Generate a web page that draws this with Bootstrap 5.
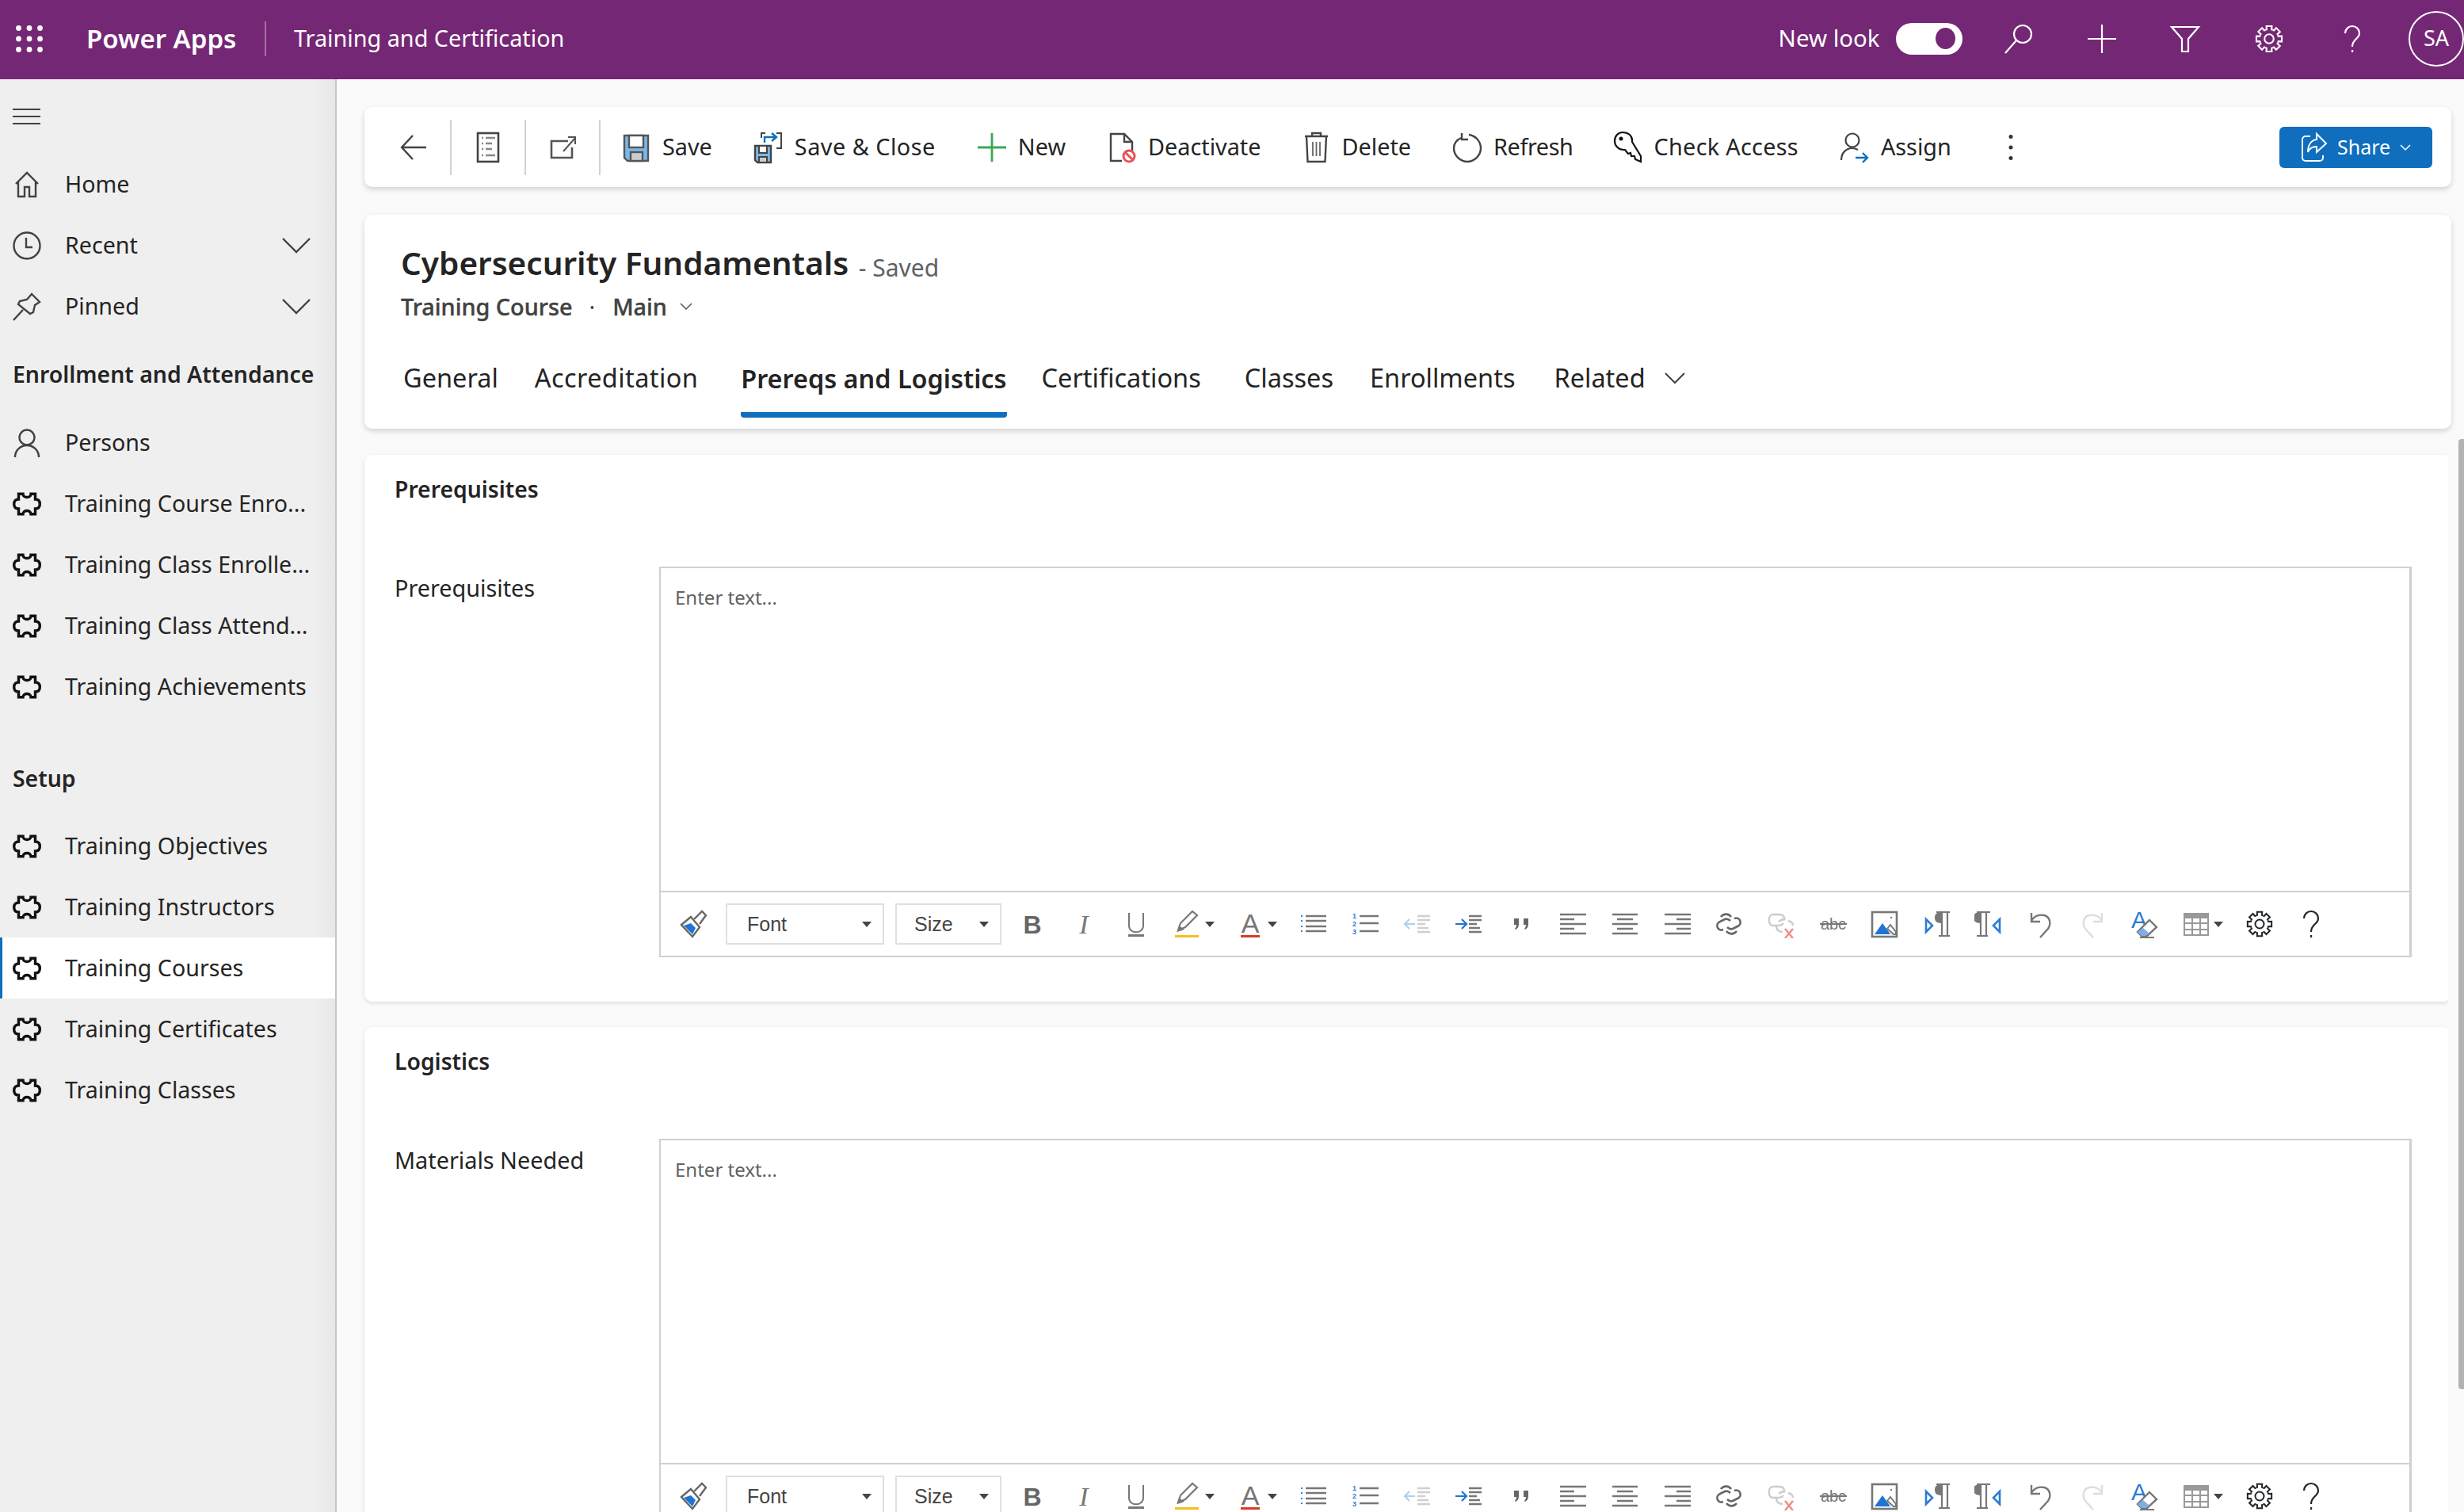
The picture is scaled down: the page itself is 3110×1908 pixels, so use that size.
<!DOCTYPE html>
<html lang="en"><head><meta charset="utf-8"><title>Power Apps</title>
<link href="https://cdn.jsdelivr.net/npm/bootstrap@5.3.0/dist/css/bootstrap.min.css" rel="stylesheet">
<style>
html,body{height:1908px;overflow:hidden}
body{font-family:"Noto Sans",sans-serif;font-size:28.8px;color:#242424;background:#fafafa;line-height:1.2}
svg{display:block;flex:none;overflow:visible}
.ic-line{fill:none;stroke:currentColor;stroke-width:2.4;stroke-linecap:butt;stroke-linejoin:miter}
.topbar{height:100px;background:#742774;color:#fff;padding-bottom:3px}
.tb-waffle{margin-left:20px;width:34px;height:34px}
.tb-brand{margin-left:55px;font-size:33px;font-weight:600;width:189px;white-space:nowrap}
.tb-sep{width:2px;height:44px;background:rgba(255,255,255,.35);margin:0 35px 0 36px}
.tb-look{font-size:29.4px}
.tb-sw{width:84px;height:40px;border-radius:20px;background:#fff;margin:0 18px 0 20px;padding-right:9px}
.tb-knob{width:25px;height:27px;border-radius:50%;background:#742774}
.tb-ico{width:105.5px}
.tb-av{width:70px;height:70px;border:2px solid #fff;border-radius:50%;font-size:27px;margin-left:18px}
.shell{height:1808px}
.sidenav{width:425px;flex:none;background:linear-gradient(to right,#efefef 94%,#e6e6e6 100%);border-right:2px solid #c6c6c6;font-size:28.6px}
.burger{height:94px;padding:37px 0 0 16px}
.sn-row{height:77px;padding-left:16px;color:#242424;text-decoration:none;white-space:nowrap}
.sn-ico{width:36px;height:36px;margin-right:30px;color:#424242}
.sn-puz{color:#111}
.sn-chev{width:36px;height:20px;margin-left:auto;margin-right:31px;color:#424242}
.sn-head{height:95px;padding-left:16px;font-weight:600;font-size:28.4px}
.sn-head-b{height:93px;margin-top:31px}
.sn-on{background:#fff;box-shadow:inset 3px 0 0 #106ebe}
.workarea{min-width:0;padding-top:35px;position:relative}
.panel{background:#fff;border-radius:10px;box-shadow:0 3px 7px rgba(0,0,0,.16)}
.cmdbar{height:101px;margin:0 16px 35px 35px;padding-left:44px}
.cmd-ic{width:36px;height:40px;color:#444}
.cmd-sep{width:2px;height:70px;background:#d2d2d2;margin:0 28px}
.cmd-sep-l{margin-right:27px}
.cmd-item{margin-right:53px;gap:15px;color:#242424;white-space:nowrap}
.cmd-wide{letter-spacing:.5px}
.cmd-tight{margin-right:51px}
.cmd-ref{letter-spacing:-.4px}
.cmd-chk{letter-spacing:.3px}
.cmd-more{margin-left:18px;width:8px;height:32px}
.share-btn{--bs-btn-bg:#106ebe;--bs-btn-hover-bg:#106ebe;--bs-btn-color:#fff;--bs-btn-hover-color:#fff;--bs-btn-border-width:0;width:193px;height:52px;margin:0 24px 0 auto;padding:0 0 0 27px;gap:12px;font-size:25px;border-radius:6px}
.titlecard{height:270px;margin:0 16px 0 35px;padding:34px 0 0 46px}
.rec-title{font-size:40.5px;font-weight:600;line-height:54px}
.rec-saved{font-size:30px;color:#616161;margin-left:2px;position:relative;top:2px}
.rec-sub{margin-top:2px;line-height:44px;color:#424242}
.rec-dot{margin:0 22px 0 21px}
.rec-sub b{font-weight:500;-webkit-text-stroke:.4px #424242}
.rec-tabs{margin-top:46px;padding-left:3px}
.rec-tabs .nav-link{padding:0 0 21px;color:#242424;font-size:32.500px;line-height:44px;border-bottom:7px solid transparent;border-radius:0 0 4px 4px;margin-bottom:0}
.rec-tabs .nav-link.active{font-weight:600;border-bottom-color:#106ebe;color:#242424;font-size:32.400px}
.rec-tabs .nav-item:nth-child(1){margin-right:46px}
.rec-tabs .nav-item:nth-child(2){margin-right:54px;letter-spacing:.4px}
.rec-tabs .nav-item:nth-child(3){margin-right:44px}
.rec-tabs .nav-item:nth-child(4){margin-right:55px}
.rec-tabs .nav-item:nth-child(5){margin-right:46px}
.rec-tabs .nav-item:nth-child(6){margin-right:49px}
.clipper{overflow:hidden;margin-right:20px;padding:36px 0 0 35px;margin-top:-3px}
.secbox{margin-right:-4px;padding:0 0 0 38px;box-shadow:0 2px 5px rgba(0,0,0,.12)}
.secbox-a{height:690px;margin-bottom:32px}
.secbox-b{height:700px}
.sec-h{height:141px;padding-top:27px;font-weight:600;font-size:28.3px}
.sec-lab{width:334px;flex:none;padding-top:10px;font-size:28.8px;font-weight:400}
.rte{width:2212px;height:493px;border:2px solid #d0d0d0;border-right-width:3px;background:#fff}
.rte-body{flex:1;padding:23px 18px 0;font-size:24px;color:#616161}
.rte-tools{height:82px;flex:none;border-top:2px solid #d0d0d0;color:#666}
.rt-s{width:65.6px;flex:none;color:#707070}
.rt-w{width:79px;flex:none;color:#707070;padding-left:14px;gap:4px}
.rt-p{width:82px;flex:none}
.rt-sel{height:52px;border:2px solid #e0e0e0;font-family:"Liberation Sans",sans-serif;font-size:25px;color:#444;padding:0 14px 0 25px;justify-content:space-between}
.rt-f{width:200px;margin-right:14px}
.rt-z{width:134px;margin-right:6px;padding-left:22px}
.rt-car{width:0;height:0;border-left:6px solid transparent;border-right:6px solid transparent;border-top:7px solid #444}
.thumb{position:absolute;right:0;top:454px;width:7px;height:1199px;background:#b3b3b3;border-radius:4px 0 0 4px}
</style></head>
<body>
<svg width="0" height="0" class="position-absolute">
<defs>
<symbol id="i-home" viewBox="0 0 36 36"><path class="ic-line" d="M4 17 18 3l14 14M7 14v19h8V21h6v12h8V14"/></symbol>
<symbol id="i-clock" viewBox="0 0 36 36"><circle class="ic-line" cx="18" cy="18" r="16.5"/><path class="ic-line" d="M17 8v12h8"/></symbol>
<symbol id="i-pin" viewBox="0 0 36 36"><path class="ic-line" d="M1 35 13 22M24 2l10 10-6 4-2 9-4 2L7 15l2-4 9-2z"/></symbol>
<symbol id="i-chev" viewBox="0 0 36 20"><path class="ic-line" d="M1 1l17 17L35 1"/></symbol>
<symbol id="i-person" viewBox="0 0 36 36"><circle class="ic-line" cx="18" cy="11" r="9.5"/><path class="ic-line" d="M3 36c0-9 7-15 15-15s15 6 15 15"/></symbol>
<symbol id="i-puzzle" viewBox="0 0 36 29"><path fill="none" stroke="currentColor" stroke-width="3.400" d="M7.500 1.700H13C13 7.500 23 7.500 23 1.700h5.500V8.500C32 8.500 34.300 10.500 34.300 14.500S32 20.500 28.500 20.500v6.800H23C23 21.500 13 21.500 13 27.300H7.500V20.500C4 20.500 1.700 18.500 1.700 14.500S4 8.500 7.500 8.500z"/></symbol>
<symbol id="i-gear" viewBox="0 0 36 36"><g fill="none" stroke="currentColor" stroke-width="2"><circle cx="18" cy="18" r="5.5"/><path id="g-t" d="M13.6 7.38 15 6.9l-.2-4.06h6.44L21 6.9l1.4.48"/><use href="#g-t" transform="rotate(45 18 18)"/><use href="#g-t" transform="rotate(90 18 18)"/><use href="#g-t" transform="rotate(135 18 18)"/><use href="#g-t" transform="rotate(180 18 18)"/><use href="#g-t" transform="rotate(225 18 18)"/><use href="#g-t" transform="rotate(270 18 18)"/><use href="#g-t" transform="rotate(315 18 18)"/></g></symbol>
<symbol id="i-help" viewBox="0 0 36 36"><path fill="none" stroke="currentColor" stroke-width="2.2" d="M9 11c0-5 4-9 9-9s9 4 9 9c0 4-3 6-5 8s-4 4-4 9"/><rect x="17" y="32" width="2.2" height="3" fill="currentColor"/></symbol>
<symbol id="r-paint" viewBox="0 0 36 36"><path d="M3 19 15 9l11 13-9 12z" fill="#fff" stroke="#666" stroke-width="2.4"/><path d="M6 20l9-3 6 6-4 8z" fill="#1f74d4"/><path d="M19 12l10-10 5 5-8 11" fill="#fff" stroke="#666" stroke-width="2.4"/></symbol>
<symbol id="r-b" viewBox="0 0 36 36"><text x="18" y="30" text-anchor="middle" font-family="Liberation Sans" font-weight="700" font-size="32" fill="#666">B</text></symbol>
<symbol id="r-i" viewBox="0 0 36 36"><text x="18" y="30" text-anchor="middle" font-family="Liberation Serif" font-style="italic" font-size="34" fill="#777">I</text></symbol>
<symbol id="r-u" viewBox="0 0 36 36"><path d="M9 4v16c0 11 18 11 18 0V4" fill="none" stroke="#777" stroke-width="2"/><rect x="8" y="31" width="20" height="3" fill="#777"/></symbol>
<symbol id="r-pen" viewBox="0 0 36 36"><path d="M6 26 9 17 24 2l6 5-15 15z" fill="none" stroke="#777" stroke-width="2.2"/><path d="M5 28l2-8 7 5z" fill="#777"/><rect x="2" y="32" width="30" height="3" fill="#f4c020"/></symbol>
<symbol id="r-a" viewBox="0 0 36 36"><text x="18" y="29" text-anchor="middle" font-family="Liberation Sans" font-size="34" fill="#777">A</text><rect x="6" y="32" width="24" height="3" fill="#d83b2b"/></symbol>
<symbol id="r-ul" viewBox="0 0 36 36"><path d="M8 8h26M8 14h26M8 21h26M8 27h26" stroke="#777" stroke-width="2.4"/><path d="M2 7h2v2H2zM2 13h2v2H2zM2 20h2v2H2zM2 26h2v2H2z" fill="#2b88d8"/></symbol>
<symbol id="r-ol" viewBox="0 0 36 36"><path d="M11 8h24M11 17h24M11 27h24" stroke="#777" stroke-width="2.4"/><g font-family="Liberation Sans" font-size="9" font-weight="700" fill="#2b7cd3"><text x="2" y="11">1</text><text x="2" y="21">2</text><text x="2" y="31">3</text></g></symbol>
<symbol id="r-ind" viewBox="0 0 36 36"><path d="M18 8h16M18 13h16M18 18h10M18 23h14M18 28h16" stroke="#777" stroke-width="2.4"/><path d="M1 18h13M9 12l6 6-6 6" fill="none" stroke="#1f74d4" stroke-width="2.2"/></symbol>
<symbol id="r-out" viewBox="0 0 36 36"><g opacity=".35"><path d="M18 8h16M18 13h16M18 18h10M18 23h14M18 28h16" stroke="#777" stroke-width="2.4"/><path d="M15 18H2M8 12l-6 6 6 6" fill="none" stroke="#1f74d4" stroke-width="2.2"/></g></symbol>
<symbol id="r-q" viewBox="0 0 36 36"><path d="M9 11h6v7c0 4-2 6-4 7l-1-1c1-1 2-3 2-5H9zM21 11h6v7c0 4-2 6-4 7l-1-1c1-1 2-3 2-5h-3z" fill="#666"/></symbol>
<symbol id="r-al" viewBox="0 0 36 36"><path d="M1 6h33M1 12h18M1 18h33M1 24h18M1 30h33" stroke="#777" stroke-width="2.4"/></symbol>
<symbol id="r-ac" viewBox="0 0 36 36"><path d="M2 6h32M8 12h20M2 18h32M8 24h20M2 30h32" stroke="#777" stroke-width="2.4"/></symbol>
<symbol id="r-ar" viewBox="0 0 36 36"><path d="M2 6h33M17 12h18M2 18h33M17 24h18M2 30h33" stroke="#777" stroke-width="2.4"/></symbol>
<symbol id="r-link" viewBox="0 0 36 36"><g fill="none" stroke="#666" stroke-width="2.6"><path d="M20 14c-2-2-4-3-7-2l-6 3c-7 3-3 13 4 10"/><path d="M16 22c2 2 4 3 7 2l6-3c7-3 3-13-4-10"/><path d="M8 9c4-5 10-4 13 0M28 27c-4 5-10 4-13 0"/></g></symbol>
<symbol id="r-unlink" viewBox="0 0 36 36"><g fill="none" stroke="#ccc" stroke-width="2.4"><path d="M21 17c-3 3-4 3-8 3H8C1 20 1 6 8 6h8c5 0 7 4 6 7"/><path d="M27 14c5 1 6 3 6 6M15 15c3-3 5-3 8-3M12 20c0 5 3 8 8 8"/></g><path d="M23 24l10 12M33 24 23 36" stroke="#ef8a80" stroke-width="2.4"/></symbol>
<symbol id="r-abc" viewBox="0 0 36 36"><text x="18" y="25" text-anchor="middle" font-family="Liberation Sans" font-size="20" fill="#777">abc</text><rect x="1" y="17" width="34" height="2" fill="#777"/></symbol>
<symbol id="r-img" viewBox="0 0 36 36"><rect x="2" y="3" width="31" height="31" fill="#fff" stroke="#777" stroke-width="2.6"/><path d="M5 31 15 17l10 14z" fill="#1f74d4"/><path d="M21 24l4-5 7 9v3h-3z" fill="none" stroke="#777" stroke-width="2"/><rect x="25" y="9" width="2" height="2" fill="#777"/></symbol>
<symbol id="r-ltr" viewBox="0 0 36 36"><path d="M4 12l8 8-8 8z" fill="none" stroke="#2b7cd3" stroke-width="2.6"/><path d="M17 3h17M24 3v30M31 3v30M20 33h14" fill="none" stroke="#777" stroke-width="2.2"/><path d="M24 17c-6 0-9-2-9-7s3-7 9-7z" fill="#777"/></symbol>
<symbol id="r-rtl" viewBox="0 0 36 36"><path d="M32 12l-8 8 8 8z" fill="none" stroke="#2b7cd3" stroke-width="2.6"/><path d="M3 3h17M8 3v30M15 3v30M3 33h14" fill="none" stroke="#777" stroke-width="2.2"/><path d="M8 17C2 17-1 15-1 10S2 3 8 3z" fill="#777"/></symbol>
<symbol id="r-undo" viewBox="0 0 36 36"><path d="M6 4v11h11M6 14C10 7 17 6 22 7c8 2 9 11 5 17l-10 11" fill="none" stroke="#777" stroke-width="2.4"/></symbol>
<symbol id="r-redo" viewBox="0 0 36 36"><path d="M30 4v11H19M30 14C26 7 19 6 14 7c-8 2-9 11-5 17l10 11" fill="none" stroke="#ddd" stroke-width="2.4"/></symbol>
<symbol id="r-clear" viewBox="0 0 36 36"><text x="11" y="23" text-anchor="middle" font-family="Liberation Sans" font-size="30" fill="#2b7cd3">A</text><path d="M24 13l9 9-12 11h-7l-5-5z" fill="#fff" stroke="#777" stroke-width="2.4"/><path d="M9 28l5 5h5l4-4-7-6z" fill="#7ab0ea"/><path d="M12 35h18" stroke="#777" stroke-width="2"/></symbol>
<symbol id="r-table" viewBox="0 0 36 36"><rect x="3" y="5" width="30" height="27" fill="#fff" stroke="#999" stroke-width="2"/><rect x="3" y="5" width="30" height="6" fill="#999"/><path d="M3 17h30M3 25h30M13 11v20M23 11v20" stroke="#999" stroke-width="2"/></symbol>
</defs></svg>

<header class="topbar d-flex align-items-center">
<svg class="tb-waffle" viewBox="0 0 34 34" fill="#fff"><circle cx="3.5" cy="3.5" r="3.4"/><circle cx="17" cy="3.5" r="3.4"/><circle cx="30.5" cy="3.5" r="3.4"/><circle cx="3.5" cy="17" r="3.4"/><circle cx="17" cy="17" r="3.4"/><circle cx="30.5" cy="17" r="3.4"/><circle cx="3.5" cy="30.5" r="3.4"/><circle cx="17" cy="30.5" r="3.4"/><circle cx="30.5" cy="30.5" r="3.4"/></svg>
<div class="tb-brand">Power Apps</div>
<div class="tb-sep"></div>
<div>Training and Certification</div>
<div class="ms-auto d-flex align-items-center">
<span class="tb-look">New look</span>
<div class="tb-sw d-flex align-items-center justify-content-end"><div class="tb-knob"></div></div>
<div class="tb-ico d-flex justify-content-center"><svg width="36" height="36" viewBox="0 0 36 36"><g fill="none" stroke="#fff" stroke-width="2.2"><circle cx="24" cy="12" r="11"/><path d="M16 20 2 36"/></g></svg></div>
<div class="tb-ico d-flex justify-content-center"><svg width="36" height="36" viewBox="0 0 36 36"><path d="M18 0v36M0 18h36" stroke="#fff" stroke-width="2.2"/></svg></div>
<div class="tb-ico d-flex justify-content-center"><svg width="36" height="36" viewBox="0 0 36 36"><path d="M1 3h34L22 18v16h-8V18z" fill="none" stroke="#fff" stroke-width="2.2"/></svg></div>
<div class="tb-ico d-flex justify-content-center text-white"><svg width="38" height="38"><use href="#i-gear"/></svg></div>
<div class="tb-ico d-flex justify-content-center text-white"><svg width="36" height="36"><use href="#i-help"/></svg></div>
<div class="tb-av d-flex align-items-center justify-content-center">SA</div>
</div>
</header>

<div class="shell d-flex">
<nav class="sidenav">
<div class="burger"><svg width="35" height="20" viewBox="0 0 35 20"><path d="M0 1h35M0 10h35M0 19h35" stroke="#424242" stroke-width="2"/></svg></div>
<a class="sn-row d-flex align-items-center" href="#"><svg class="sn-ico"><use href="#i-home"/></svg>Home</a>
<a class="sn-row d-flex align-items-center" href="#"><svg class="sn-ico"><use href="#i-clock"/></svg>Recent<svg class="sn-chev"><use href="#i-chev"/></svg></a>
<a class="sn-row d-flex align-items-center" href="#"><svg class="sn-ico"><use href="#i-pin"/></svg>Pinned<svg class="sn-chev"><use href="#i-chev"/></svg></a>
<div class="sn-head d-flex align-items-center">Enrollment and Attendance</div>
<a class="sn-row d-flex align-items-center" href="#"><svg class="sn-ico"><use href="#i-person"/></svg>Persons</a>
<a class="sn-row d-flex align-items-center" href="#"><svg class="sn-ico sn-puz"><use href="#i-puzzle"/></svg>Training Course Enro...</a>
<a class="sn-row d-flex align-items-center" href="#"><svg class="sn-ico sn-puz"><use href="#i-puzzle"/></svg>Training Class Enrolle...</a>
<a class="sn-row d-flex align-items-center" href="#"><svg class="sn-ico sn-puz"><use href="#i-puzzle"/></svg>Training Class Attend...</a>
<a class="sn-row d-flex align-items-center" href="#"><svg class="sn-ico sn-puz"><use href="#i-puzzle"/></svg>Training Achievements</a>
<div class="sn-head sn-head-b d-flex align-items-center">Setup</div>
<a class="sn-row d-flex align-items-center" href="#"><svg class="sn-ico sn-puz"><use href="#i-puzzle"/></svg>Training Objectives</a>
<a class="sn-row d-flex align-items-center" href="#"><svg class="sn-ico sn-puz"><use href="#i-puzzle"/></svg>Training Instructors</a>
<a class="sn-row sn-on d-flex align-items-center" href="#"><svg class="sn-ico sn-puz"><use href="#i-puzzle"/></svg>Training Courses</a>
<a class="sn-row d-flex align-items-center" href="#"><svg class="sn-ico sn-puz"><use href="#i-puzzle"/></svg>Training Certificates</a>
<a class="sn-row d-flex align-items-center" href="#"><svg class="sn-ico sn-puz"><use href="#i-puzzle"/></svg>Training Classes</a>
</nav>

<main class="workarea flex-grow-1">
<div class="panel cmdbar d-flex align-items-center">
<svg class="cmd-ic" viewBox="0 0 36 40"><path class="ic-line" d="M34 20H4M17 5 3 20l14 15"/></svg>
<div class="cmd-sep"></div>
<svg class="cmd-ic" viewBox="0 0 36 40"><rect x="5" y="2" width="26" height="36" fill="none" stroke="#444" stroke-width="2.6"/><path d="M10 8h2M15 8h12M10 15h2M15 15h8M10 22h2M15 22h8M10 30h2M15 30h12" stroke="#888" stroke-width="2.4"/></svg>
<div class="cmd-sep"></div>
<svg class="cmd-ic" viewBox="0 0 36 40"><path d="M25 12H4v21h26V20" fill="none" stroke="#555" stroke-width="2.6"/><path d="M19 25 34 8M25 7h9v9" fill="none" stroke="#555" stroke-width="2"/></svg>
<div class="cmd-sep cmd-sep-l"></div>
<div class="cmd-item d-flex align-items-center"><svg class="cmd-ic" viewBox="0 0 36 40"><path d="M3 5h30v32H7l-4-4z" fill="#79b8ea" stroke="#555" stroke-width="2.4"/><rect x="9" y="5" width="18" height="15" fill="#fff" stroke="#555" stroke-width="2.4"/><rect x="11" y="26" width="15" height="11" fill="#ccc" stroke="#555" stroke-width="2.4"/></svg>Save</div>
<div class="cmd-item cmd-wide d-flex align-items-center"><svg class="cmd-ic" viewBox="0 0 36 40"><path d="M1 18h20v21H4l-3-3z" fill="#79b8ea" stroke="#444" stroke-width="2.4"/><rect x="6" y="18" width="10" height="9" fill="#fff" stroke="#444" stroke-width="2"/><rect x="6" y="32" width="10" height="7" fill="#ccc" stroke="#444" stroke-width="2"/><path d="M14 2H9v6M28 2h6v19h-6" fill="none" stroke="#444" stroke-width="2"/><path d="M13 14V7h13M22 2l6 5-6 5" fill="none" stroke="#106ebe" stroke-width="2.4"/></svg>Save &amp; Close</div>
<div class="cmd-item d-flex align-items-center"><svg class="cmd-ic" viewBox="0 0 36 40"><path d="M18 2v36M0 20h36" stroke="#3aa757" stroke-width="2.8"/></svg>New</div>
<div class="cmd-item cmd-tight d-flex align-items-center"><svg class="cmd-ic" viewBox="0 0 36 40"><path d="M18 37H4V3h17l10 10v11M21 3v10h10" fill="none" stroke="#444" stroke-width="2.4"/><circle cx="27" cy="31" r="7" fill="#fff" stroke="#e8505b" stroke-width="3"/><path d="M22.5 26.5l9 9" stroke="#e8505b" stroke-width="3"/></svg>Deactivate</div>
<div class="cmd-item d-flex align-items-center"><svg class="cmd-ic" viewBox="0 0 36 40"><path d="M4 6h29M6 6l1.500 32h22L31 6M13 6V2h11v4" fill="none" stroke="#444" stroke-width="2.4"/><path d="M14 13v18M18.500 13v18M23 13v18" stroke="#666" stroke-width="1.800"/></svg>Delete</div>
<div class="cmd-item cmd-tight cmd-ref d-flex align-items-center"><svg class="cmd-ic" viewBox="0 0 36 40"><path d="M10 8C4 11 1 15 1 21c0 9 8 17 17 17s17-8 17-17c0-9-7-16-15-17" fill="none" stroke="#444" stroke-width="2.4"/><path d="M11 2v8h8" fill="none" stroke="#444" stroke-width="2.4"/></svg>Refresh</div>
<div class="cmd-item cmd-chk d-flex align-items-center"><svg class="cmd-ic" viewBox="0 0 36 40"><path d="M11 1C5 1 1 6 1 12c0 6 5 11 11 11h2l4 5 3-1 1 4 4 0 1 4 7 3v-7L23 13v-2C23 5 18 1 11 1z" fill="#fff" stroke="#111" stroke-width="2.2"/><circle cx="9" cy="9" r="2.500" fill="#111"/></svg>Check Access</div>
<div class="cmd-item d-flex align-items-center"><svg class="cmd-ic" viewBox="0 0 36 40"><circle cx="15" cy="11" r="8.500" fill="none" stroke="#444" stroke-width="2.2"/><path d="M1 36c0-9 6-15 14-15 3 0 5 1 7 2" fill="none" stroke="#444" stroke-width="2.2"/><path d="M19 33h15M28 27l6 6-6 6" fill="none" stroke="#106ebe" stroke-width="2.4"/></svg>Assign</div>
<svg class="cmd-more" viewBox="0 0 8 32" fill="#333"><circle cx="4" cy="2.500" r="2.500"/><circle cx="4" cy="16" r="2.500"/><circle cx="4" cy="29.500" r="2.500"/></svg>
<button type="button" class="btn share-btn d-flex align-items-center"><svg width="34" height="38" viewBox="0 0 34 38"><path d="M12 5H6a4 4 0 0 0-4 4v23a4 4 0 0 0 4 4h18a4 4 0 0 0 4-4v-3" fill="none" stroke="#fff" stroke-width="2"/><path d="M20 2l12 12-12 11v-7c-5 0-9 2-11 7 0-9 4-15 11-16z" fill="none" stroke="#fff" stroke-width="2"/></svg>Share<svg width="14" height="8" viewBox="0 0 14 8"><path d="M1 1l6 6 6-6" fill="none" stroke="#fff" stroke-width="1.500"/></svg></button>
</div>

<div class="panel titlecard">
<div class="rec-title">Cybersecurity Fundamentals <span class="rec-saved fw-normal">- Saved</span></div>
<div class="rec-sub d-flex align-items-center"><b>Training Course</b><span class="rec-dot">·</span><b>Main</b><svg class="ms-3" width="16" height="10" viewBox="0 0 16 10"><path d="M1 1l7 7 7-7" fill="none" stroke="#555" stroke-width="1.500"/></svg></div>
<ul class="nav rec-tabs">
<li class="nav-item"><a class="nav-link" href="#">General</a></li>
<li class="nav-item"><a class="nav-link" href="#">Accreditation</a></li>
<li class="nav-item"><a class="nav-link active" href="#">Prereqs and Logistics</a></li>
<li class="nav-item"><a class="nav-link" href="#">Certifications</a></li>
<li class="nav-item"><a class="nav-link" href="#">Classes</a></li>
<li class="nav-item"><a class="nav-link" href="#">Enrollments</a></li>
<li class="nav-item"><a class="nav-link d-flex align-items-center gap-4" href="#">Related<svg width="26" height="14" viewBox="0 0 26 14"><path d="M1 1l12 12L25 1" fill="none" stroke="#424242" stroke-width="2"/></svg></a></li>
</ul>
</div>

<div class="clipper">
<section class="panel secbox secbox-a">
<div class="sec-h">Prerequisites</div>
<div class="d-flex">
<div class="sec-lab">Prerequisites</div>
<div class="rte d-flex flex-column"><div class="rte-body">Enter text...</div>
<div class="rte-tools d-flex align-items-center">
<div class="rt-p d-flex justify-content-center"><svg width="36" height="36"><use href="#r-paint"/></svg></div>
<div class="rt-sel rt-f d-flex align-items-center">Font<span class="rt-car"></span></div>
<div class="rt-sel rt-z d-flex align-items-center">Size<span class="rt-car"></span></div>
<div class="rt-s d-flex justify-content-center"><svg width="36" height="36"><use href="#r-b"/></svg></div>
<div class="rt-s d-flex justify-content-center"><svg width="36" height="36"><use href="#r-i"/></svg></div>
<div class="rt-s d-flex justify-content-center"><svg width="36" height="36"><use href="#r-u"/></svg></div>
<div class="rt-w d-flex align-items-center"><svg width="36" height="36"><use href="#r-pen"/></svg><span class="rt-car"></span></div>
<div class="rt-w d-flex align-items-center"><svg width="36" height="36"><use href="#r-a"/></svg><span class="rt-car"></span></div>
<div class="rt-s d-flex justify-content-center"><svg width="36" height="36"><use href="#r-ul"/></svg></div>
<div class="rt-s d-flex justify-content-center"><svg width="36" height="36"><use href="#r-ol"/></svg></div>
<div class="rt-s d-flex justify-content-center"><svg width="36" height="36"><use href="#r-out"/></svg></div>
<div class="rt-s d-flex justify-content-center"><svg width="36" height="36"><use href="#r-ind"/></svg></div>
<div class="rt-s d-flex justify-content-center"><svg width="36" height="36"><use href="#r-q"/></svg></div>
<div class="rt-s d-flex justify-content-center"><svg width="36" height="36"><use href="#r-al"/></svg></div>
<div class="rt-s d-flex justify-content-center"><svg width="36" height="36"><use href="#r-ac"/></svg></div>
<div class="rt-s d-flex justify-content-center"><svg width="36" height="36"><use href="#r-ar"/></svg></div>
<div class="rt-s d-flex justify-content-center"><svg width="36" height="36"><use href="#r-link"/></svg></div>
<div class="rt-s d-flex justify-content-center"><svg width="36" height="36"><use href="#r-unlink"/></svg></div>
<div class="rt-s d-flex justify-content-center"><svg width="36" height="36"><use href="#r-abc"/></svg></div>
<div class="rt-s d-flex justify-content-center"><svg width="36" height="36"><use href="#r-img"/></svg></div>
<div class="rt-s d-flex justify-content-center"><svg width="36" height="36"><use href="#r-ltr"/></svg></div>
<div class="rt-s d-flex justify-content-center"><svg width="36" height="36"><use href="#r-rtl"/></svg></div>
<div class="rt-s d-flex justify-content-center"><svg width="36" height="36"><use href="#r-undo"/></svg></div>
<div class="rt-s d-flex justify-content-center"><svg width="36" height="36"><use href="#r-redo"/></svg></div>
<div class="rt-s d-flex justify-content-center"><svg width="36" height="36"><use href="#r-clear"/></svg></div>
<div class="rt-w d-flex align-items-center"><svg width="36" height="36"><use href="#r-table"/></svg><span class="rt-car"></span></div>
<div class="rt-s d-flex justify-content-center text-dark"><svg width="36" height="36"><use href="#i-gear"/></svg></div>
<div class="rt-s d-flex justify-content-center text-dark"><svg width="36" height="36"><use href="#i-help"/></svg></div>
</div></div>
</div>
</section>
<section class="panel secbox secbox-b">
<div class="sec-h">Logistics</div>
<div class="d-flex">
<div class="sec-lab">Materials Needed</div>
<div class="rte d-flex flex-column"><div class="rte-body">Enter text...</div>
<div class="rte-tools d-flex align-items-center">
<div class="rt-p d-flex justify-content-center"><svg width="36" height="36"><use href="#r-paint"/></svg></div>
<div class="rt-sel rt-f d-flex align-items-center">Font<span class="rt-car"></span></div>
<div class="rt-sel rt-z d-flex align-items-center">Size<span class="rt-car"></span></div>
<div class="rt-s d-flex justify-content-center"><svg width="36" height="36"><use href="#r-b"/></svg></div>
<div class="rt-s d-flex justify-content-center"><svg width="36" height="36"><use href="#r-i"/></svg></div>
<div class="rt-s d-flex justify-content-center"><svg width="36" height="36"><use href="#r-u"/></svg></div>
<div class="rt-w d-flex align-items-center"><svg width="36" height="36"><use href="#r-pen"/></svg><span class="rt-car"></span></div>
<div class="rt-w d-flex align-items-center"><svg width="36" height="36"><use href="#r-a"/></svg><span class="rt-car"></span></div>
<div class="rt-s d-flex justify-content-center"><svg width="36" height="36"><use href="#r-ul"/></svg></div>
<div class="rt-s d-flex justify-content-center"><svg width="36" height="36"><use href="#r-ol"/></svg></div>
<div class="rt-s d-flex justify-content-center"><svg width="36" height="36"><use href="#r-out"/></svg></div>
<div class="rt-s d-flex justify-content-center"><svg width="36" height="36"><use href="#r-ind"/></svg></div>
<div class="rt-s d-flex justify-content-center"><svg width="36" height="36"><use href="#r-q"/></svg></div>
<div class="rt-s d-flex justify-content-center"><svg width="36" height="36"><use href="#r-al"/></svg></div>
<div class="rt-s d-flex justify-content-center"><svg width="36" height="36"><use href="#r-ac"/></svg></div>
<div class="rt-s d-flex justify-content-center"><svg width="36" height="36"><use href="#r-ar"/></svg></div>
<div class="rt-s d-flex justify-content-center"><svg width="36" height="36"><use href="#r-link"/></svg></div>
<div class="rt-s d-flex justify-content-center"><svg width="36" height="36"><use href="#r-unlink"/></svg></div>
<div class="rt-s d-flex justify-content-center"><svg width="36" height="36"><use href="#r-abc"/></svg></div>
<div class="rt-s d-flex justify-content-center"><svg width="36" height="36"><use href="#r-img"/></svg></div>
<div class="rt-s d-flex justify-content-center"><svg width="36" height="36"><use href="#r-ltr"/></svg></div>
<div class="rt-s d-flex justify-content-center"><svg width="36" height="36"><use href="#r-rtl"/></svg></div>
<div class="rt-s d-flex justify-content-center"><svg width="36" height="36"><use href="#r-undo"/></svg></div>
<div class="rt-s d-flex justify-content-center"><svg width="36" height="36"><use href="#r-redo"/></svg></div>
<div class="rt-s d-flex justify-content-center"><svg width="36" height="36"><use href="#r-clear"/></svg></div>
<div class="rt-w d-flex align-items-center"><svg width="36" height="36"><use href="#r-table"/></svg><span class="rt-car"></span></div>
<div class="rt-s d-flex justify-content-center text-dark"><svg width="36" height="36"><use href="#i-gear"/></svg></div>
<div class="rt-s d-flex justify-content-center text-dark"><svg width="36" height="36"><use href="#i-help"/></svg></div>
</div></div>
</div>
</section>
</div>
<div class="thumb"></div>
</main>
</div>
<script src="https://cdn.jsdelivr.net/npm/bootstrap@5.3.0/dist/js/bootstrap.bundle.min.js"></script>
</body></html>
